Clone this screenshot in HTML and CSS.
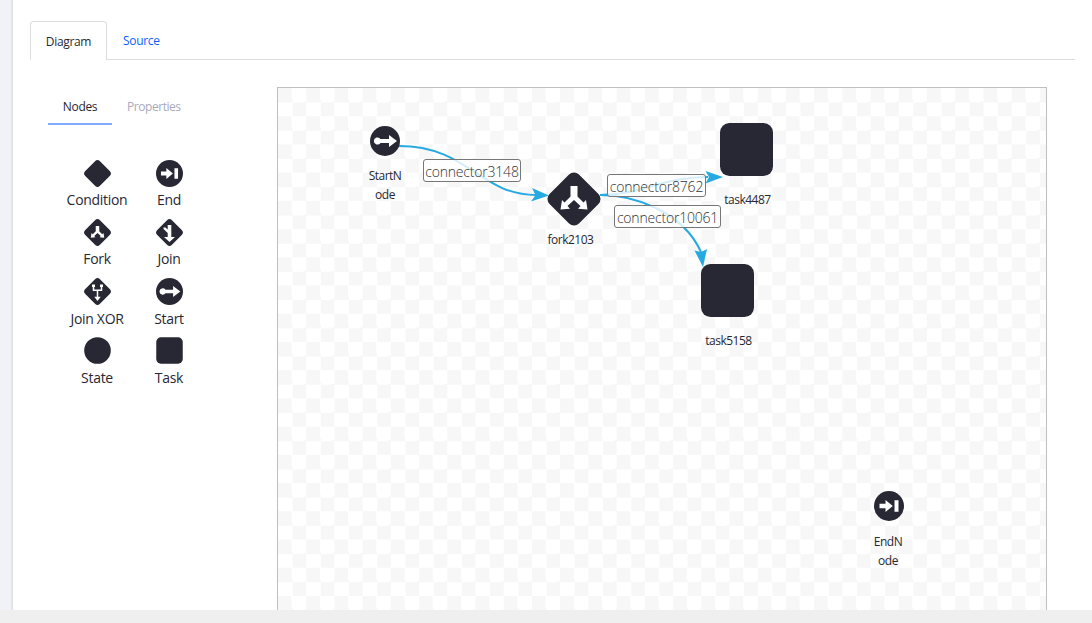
FILE: index.html
```html
<!DOCTYPE html>
<html lang="en">
<head>
<meta charset="utf-8">
<title>Workflow Diagram</title>
<link rel="stylesheet" href="styles.css">
</head>
<body>
<svg class="defs" width="0" height="0" aria-hidden="true">
  <symbol id="condition" viewBox="0 0 54 54"><rect x="6.200" y="6.200" width="41.600" height="41.600" rx="7" transform="rotate(45 27 27)"/></symbol>
  <symbol id="end" viewBox="0 0 30 30"><circle cx="15" cy="15" r="15"/><path class="cut" d="M5.500 12.800H11.500V9L18.800 15L11.500 21V17.200H5.500ZM20.500 9.300H24.500V20.700H20.500Z"/></symbol>
  <symbol id="start" viewBox="0 0 30 30"><circle cx="15" cy="15" r="15"/><path class="cut" d="M3.800 15A3.700 3.700 0 0 1 10.500 13H19V9L27 15L19 21V17H10.500A3.700 3.700 0 0 1 3.800 15Z"/></symbol>
  <symbol id="fork" viewBox="0 0 54 54"><rect x="6.200" y="6.200" width="41.600" height="41.600" rx="7" transform="rotate(45 27 27)"/><path class="cut" d="M23.500 14H30.500V24.500L36.500 30.500L39 28L40.500 37.500L31 36.700L33.500 34L27 28L20.500 34L23 36.700L13.500 37.500L15 28L17.500 30.500L23.500 24.500Z"/></symbol>
  <symbol id="join" viewBox="0 0 27 27"><rect x="3.100" y="3.100" width="20.800" height="20.800" rx="3.500" transform="rotate(45 13.500 13.500)"/><path class="cut" d="M11.700 6H15.300V18H19L13.500 23L8 18H11.700V14L7.500 10V8.500H9.500L11.700 10.500Z"/></symbol>
  <symbol id="joinxor" viewBox="0 0 27 27"><rect x="3.100" y="3.100" width="20.800" height="20.800" rx="3.500" transform="rotate(45 13.500 13.500)"/><path class="line" d="M9.500 8V12.200H17.500V8M13.500 12.200V20"/><path class="cut" d="M8 6.500H11V9H8ZM16 6.500H19V9H16ZM10.300 18.800H16.700L13.500 23Z"/></symbol>
  <symbol id="state" viewBox="0 0 27 27"><circle cx="13.500" cy="13.500" r="13.300"/></symbol>
  <symbol id="task" viewBox="0 0 54 54"><rect x=".5" y=".5" width="53" height="53" rx="9.500"/></symbol>
</svg>
<div class="app">
  <aside class="rail"></aside>
  <main class="sheet">
    <nav class="tabs">
      <a class="tab tab-active">Diagram</a>
      <a class="tab tab-link">Source</a>
    </nav>
    <div class="editor">
      <section class="panel">
        <nav class="subtabs">
          <a class="subtab subtab-active">Nodes</a>
          <a class="subtab">Properties</a>
        </nav>
        <div class="palette">
          <div class="item"><svg><use href="#condition"/></svg><span>Condition</span></div>
          <div class="item"><svg><use href="#end"/></svg><span>End</span></div>
          <div class="item"><svg><use href="#fork"/></svg><span>Fork</span></div>
          <div class="item"><svg><use href="#join"/></svg><span>Join</span></div>
          <div class="item"><svg><use href="#joinxor"/></svg><span>Join XOR</span></div>
          <div class="item"><svg><use href="#start"/></svg><span>Start</span></div>
          <div class="item"><svg><use href="#state"/></svg><span>State</span></div>
          <div class="item"><svg><use href="#task"/></svg><span>Task</span></div>
        </div>
      </section>
      <section class="canvas">
        <svg class="wires" viewBox="278 88 768 522">
          <path class="wire" d="M399 146C468 146 480 195 536 195"/>
          <path class="wire" d="M600 195C644 195 660 177 708 177"/>
          <path class="wire" d="M600 195C632 195 682 210 701 252"/>
          <path class="head" d="M549 195.500L532 188L535.500 195L531 201.500Z"/>
          <path class="head" d="M723 177L705.500 171L709 177L705.500 183.500Z"/>
          <path class="head" d="M703 267L707 249L701 252L694.500 250.500Z"/>
        </svg>
        <div class="node node-start"><svg><use href="#start"/></svg><span>StartN<br>ode</span></div>
        <div class="node node-fork"><svg><use href="#fork"/></svg><span>fork2103</span></div>
        <div class="node node-task-a"><svg><use href="#task"/></svg><span>task4487</span></div>
        <div class="node node-task-b"><svg><use href="#task"/></svg><span>task5158</span></div>
        <div class="node node-end"><svg><use href="#end"/></svg><span>EndN<br>ode</span></div>
        <span class="label label-a">connector3148</span>
        <span class="label label-b">connector8762</span>
        <span class="label label-c">connector10061</span>
      </section>
    </div>
  </main>
</div>
<footer class="bar"></footer>
</body>
</html>
```
FILE: styles.css
```css
* { box-sizing: border-box; }
body {
  margin: 0;
  height: 623px;
  display: flex;
  flex-direction: column;
  overflow: hidden;
  background: #fff;
  color: #272833;
  font-family: "Open Sans", "Noto Sans", sans-serif;
  font-size: 12px;
}
.defs { position: absolute; }
.app { flex: 1; min-height: 0; display: flex; overflow: hidden; }
.bar { height: 13px; background: #efefef; flex: none; }
.rail { width: 13px; flex: none; background: linear-gradient(90deg, #f1f2f7 10px, #dddee3 13px); }
.sheet { flex: 1; padding: 21px 17px 0; display: flex; flex-direction: column; }
.tabs { display: flex; height: 39px; border-bottom: 1px solid #dcdcdc; flex: none; }
.tab { height: 39px; line-height: 40px; font-size: 12px; letter-spacing: -.33px; }
.tab-active {
  width: 77px;
  text-align: center;
  background: #fff;
  border: 1px solid #dcdcdc;
  border-bottom: 0;
  border-radius: 4px 4px 0 0;
}
.tab-link { padding-left: 16px; color: #0b5fff; letter-spacing: -.33px; }
.editor { flex: 1; display: flex; padding-top: 27px; min-height: 0; }
.panel { width: 247px; flex: none; padding-left: 18px; }
.subtabs { display: flex; height: 38px; letter-spacing: -.45px; }
.subtab { color: #a7a9bc; line-height: 40px; padding-left: 15px; }
.subtab-active { width: 64px; padding: 0; text-align: center; color: #272833; border-bottom: 2px solid #80acff; letter-spacing: -.33px; }
.palette { display: grid; grid-template-columns: 72px 72px; grid-auto-rows: 59.100px; margin: 34.700px 0 0 13px; }
.item { display: flex; flex-direction: column; align-items: center; font-size: 14px; letter-spacing: -.3px; }
.item svg { width: 27px; height: 27px; flex: none; }
.item span { line-height: 20px; margin-top: 3.700px; white-space: nowrap; }
svg { fill: #272833; display: block; }
.cut { fill: #fff; }
.line { fill: none; stroke: #fff; stroke-width: 1.500; }
.canvas {
  position: relative;
  width: 770px;
  border: 1px solid #bfbfbf;
  border-bottom: 0;
  overflow: hidden;
  background: repeating-conic-gradient(#fff 0 25%, #f7f7f7 0 50%) 0 0 / 28.220px 28.220px;
}
.wires { position: absolute; left: 0; top: 0; width: 768px; height: 522px; }
.wire { fill: none; stroke: #27aae1; stroke-width: 2; }
.head { fill: #27aae1; }
.node { position: absolute; width: 54px; display: flex; flex-direction: column; align-items: center; text-align: center; font-size: 12px; letter-spacing: -.5px; line-height: 19px; }
.node svg { width: 54px; height: 54px; flex: none; }
.node-start svg, .node-end svg { width: 30px; height: 30px; }
.node-start { left: 80px; top: 38px; }
.node-start span { padding-top: 10px; }
.node-end { left: 584px; top: 403px; line-height: 18.500px; }
.node-end span { padding-top: 12px; margin-right: 2px; }
.node-fork { left: 269px; top: 84px; }
.node-fork span { padding-top: 4px; margin-right: 7px; }
.node-task-a { left: 441.500px; top: 34.500px; }
.node-task-b { left: 422.500px; top: 175.500px; }
.node-task-a svg, .node-task-b svg { transform: translate(-.5px, -.5px); }
.node-task-a span, .node-task-b span { padding-top: 13px; margin-left: 2px; }
.label {
  position: absolute;
  height: 23px;
  line-height: 23px;
  border: 1px solid #777;
  border-radius: 3px;
  background: rgba(255, 255, 255, .8);
  color: #333;
  font-size: 14px;
  font-weight: 300;
  letter-spacing: -.2px;
  text-align: center;
  white-space: nowrap;
}
.label-a { left: 145px; top: 71px; width: 98px; }
.label-b { left: 329px; top: 86px; width: 99px; }
.label-c { left: 336px; top: 117px; width: 107px; }
```
